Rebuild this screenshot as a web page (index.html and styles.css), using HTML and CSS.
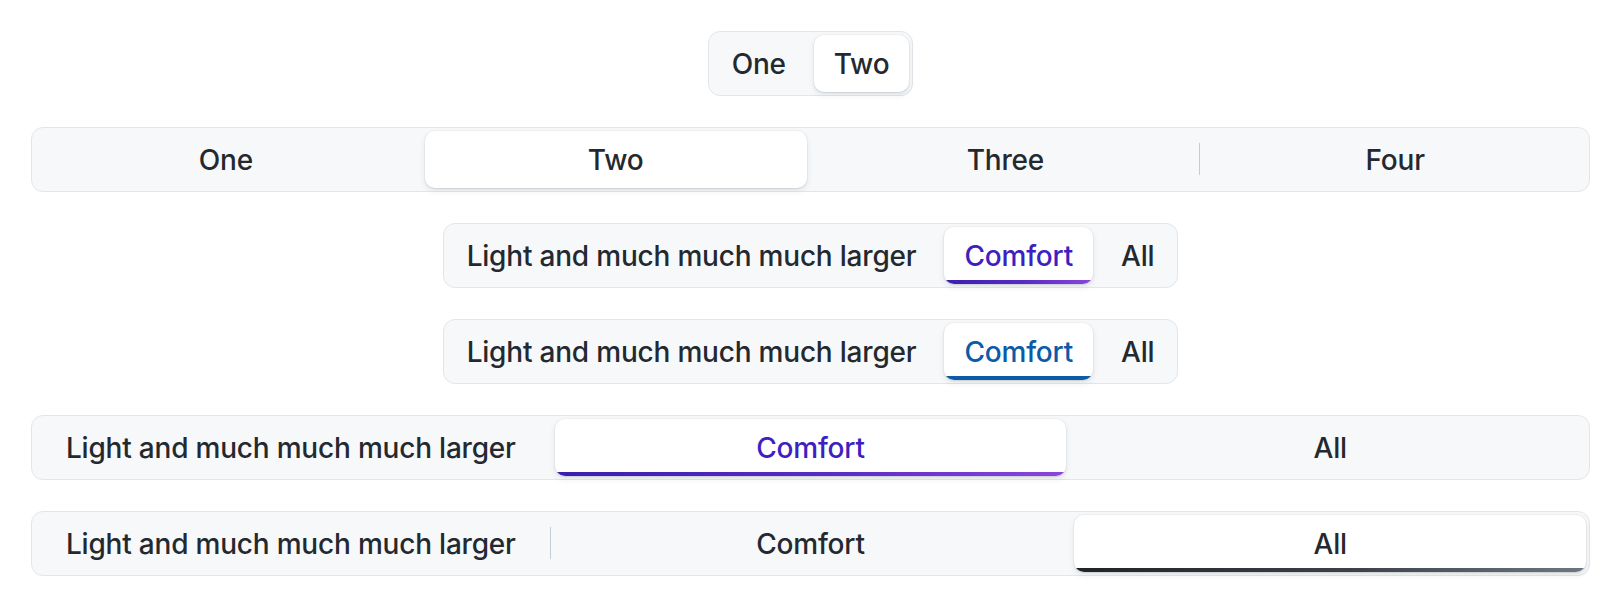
FILE: index.html
```html
<!DOCTYPE html>
<html lang="en">
<head>
<meta charset="utf-8">
<title>Segmented controls</title>
<link rel="stylesheet" href="styles.css">
</head>
<body>
<main class="page">
  <div class="seg-control">
    <button class="seg">One</button>
    <button class="seg is-selected">Two</button>
  </div>

  <div class="seg-control full">
    <button class="seg">One</button>
    <button class="seg is-selected">Two</button>
    <button class="seg">Three</button>
    <button class="seg divided">Four</button>
  </div>

  <div class="seg-control">
    <button class="seg">Light and much much much larger</button>
    <button class="seg is-selected underline accent-violet">Comfort</button>
    <button class="seg">All</button>
  </div>

  <div class="seg-control">
    <button class="seg">Light and much much much larger</button>
    <button class="seg is-selected underline accent-blue">Comfort</button>
    <button class="seg">All</button>
  </div>

  <div class="seg-control full">
    <button class="seg">Light and much much much larger</button>
    <button class="seg is-selected underline accent-violet">Comfort</button>
    <button class="seg">All</button>
  </div>

  <div class="seg-control full">
    <button class="seg">Light and much much much larger</button>
    <button class="seg divided">Comfort</button>
    <button class="seg is-selected underline accent-dark">All</button>
  </div>
</main>
</body>
</html>
```

FILE: styles.css
```css
* {
  box-sizing: border-box;
}

html,
body {
  margin: 0;
  background: #ffffff;
}

body {
  font-family: Inter, "Liberation Sans", sans-serif;
  color: #1f2328;
}

.page {
  display: flex;
  flex-direction: column;
  align-items: center;
  gap: 31px;
  padding: 31px;
}

.seg-control {
  display: flex;
  gap: 8px;
  padding: 3px;
  border: 1px solid #e2e6ea;
  border-radius: 12px;
  background: #f6f8fa;
}

.seg-control.full {
  align-self: stretch;
}

.seg-control.full .seg {
  flex: 1 1 0;
}

.seg {
  position: relative;
  display: flex;
  align-items: center;
  justify-content: center;
  height: 57px;
  padding: 0 20px;
  border: 0;
  border-radius: 10px;
  background: transparent;
  font-family: inherit;
  font-size: 28px;
  font-weight: 500;
  letter-spacing: -0.2px;
  color: #24292f;
  white-space: nowrap;
  cursor: pointer;
}

.seg.divided::before {
  content: "";
  position: absolute;
  left: -5px;
  top: 12px;
  width: 1px;
  height: 32px;
  background: #c3ccd7;
}

.seg.is-selected {
  background: #ffffff;
  box-shadow:
    0 0 0 1px rgba(31, 35, 40, 0.025),
    0 1px 2px rgba(31, 35, 40, 0.1),
    0 3px 7px rgba(31, 35, 40, 0.08);
}

.seg.underline {
  overflow: hidden;
}

.seg.underline::after {
  content: "";
  position: absolute;
  left: 0;
  right: 0;
  bottom: 0;
  height: 4px;
}

.accent-violet {
  color: #3e1fc2;
}

.accent-violet::after {
  background: linear-gradient(90deg, #3a1eb0 0%, #5a2bc6 55%, #8b45de 100%);
}

.accent-blue {
  color: #0a5ba8;
}

.accent-blue::after {
  background: #0a5ba8;
}

.accent-dark {
  color: #24292f;
}

.accent-dark::after {
  background: linear-gradient(90deg, #1f2328 0%, #3d4249 55%, #6e7781 100%);
}
```
